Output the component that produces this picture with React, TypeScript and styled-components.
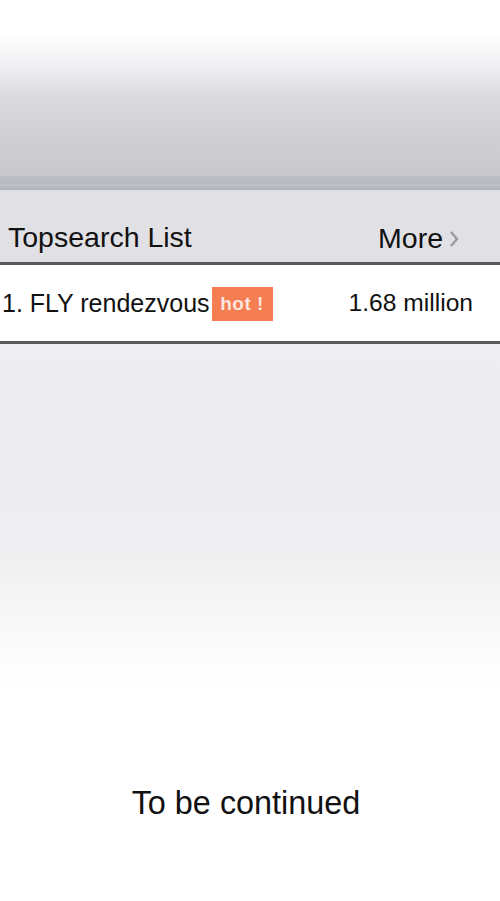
import React from 'react';
import styled, { createGlobalStyle } from 'styled-components';

const GlobalStyle = createGlobalStyle`
	html, body {
		margin: 0;
		padding: 0;
		background: #ffffff;
	}

	body {
		font-family: 'Liberation Sans', Arial, sans-serif;
		color: #111111;
	}
`;

const Page = styled.div`
	display: flex;
	flex-direction: column;
	width: 500px;
	height: 901px;
	overflow: hidden;
`;

const TopBar = styled.div`
	height: 176px;
	background: linear-gradient(
		to bottom,
		#ffffff 0px,
		#ffffff 34px,
		#f3f3f5 60px,
		#dcdce0 95px,
		#d0d0d4 135px,
		#c8c8cd 176px
	);
`;

const Shelf = styled.div`
	height: 14px;
	background: linear-gradient(to bottom, #babdc4 0px, #b7bac1 8px, #c4c6cc 9px, #b5b8bf 11px, #b2b5bc 14px);
`;

const SectionHeader = styled.div`
	display: flex;
	align-items: center;
	justify-content: space-between;
	height: 72px;
	padding: 0 40px 0 8px;
	background: #e0e0e5;
	border-bottom: 3px solid #585858;
`;

const SectionTitle = styled.span`
	font-size: 28.5px;
	padding-top: 22px;
`;

const MoreLink = styled.a`
	display: flex;
	align-items: center;
	gap: 5px;
	font-size: 28.5px;
	color: #111111;
	text-decoration: none;
	padding-top: 24px;
	cursor: pointer;
`;

const Chevron = styled.svg`
	width: 12px;
	height: 18px;
	margin-top: 2px;
`;

const Row = styled.div`
	display: flex;
	align-items: center;
	justify-content: space-between;
	height: 76px;
	padding: 0 27px 0 2px;
	background: #ffffff;
	border-bottom: 3px solid #5a5a5a;
	font-size: 25px;
`;

const RowTitle = styled.span`
	display: flex;
	align-items: center;
	gap: 2px;
`;

const HotBadge = styled.span`
	display: inline-flex;
	align-items: center;
	justify-content: center;
	width: 61px;
	height: 34px;
	margin-top: 2px;
	background: #f47d52;
	color: rgba(255, 255, 255, 0.82);
	font-size: 19px;
	font-weight: bold;
	letter-spacing: 0.5px;
`;

const Count = styled.span`
	font-size: 24.6px;
`;

const Footer = styled.div`
	flex: 1;
	display: flex;
	align-items: flex-end;
	justify-content: center;
	padding: 0 8px 79px 0;
	background: linear-gradient(
		to bottom,
		#eeeef0 0px,
		#ececf0 120px,
		#efeff1 210px,
		#f7f7f8 270px,
		#fdfdfd 320px,
		#ffffff 350px
	);
`;

const Continued = styled.span`
	font-size: 32.4px;
	color: #111111;
`;

const App = (): JSX.Element => {
	return (
		<>
			<GlobalStyle />
			<Page>
				<TopBar />
				<Shelf />
				<SectionHeader>
					<SectionTitle>Topsearch List</SectionTitle>
					<MoreLink>
						More
						<Chevron viewBox="0 0 12 18">
							<path d="M3 2 L9 9 L3 16" fill="none" stroke="#9a9a9a" strokeWidth="2.4" />
						</Chevron>
					</MoreLink>
				</SectionHeader>
				<Row>
					<RowTitle>
						1. FLY rendezvous
						<HotBadge>hot !</HotBadge>
					</RowTitle>
					<Count>1.68 million</Count>
				</Row>
				<Footer>
					<Continued>To be continued</Continued>
				</Footer>
			</Page>
		</>
	);
};

export default App;
